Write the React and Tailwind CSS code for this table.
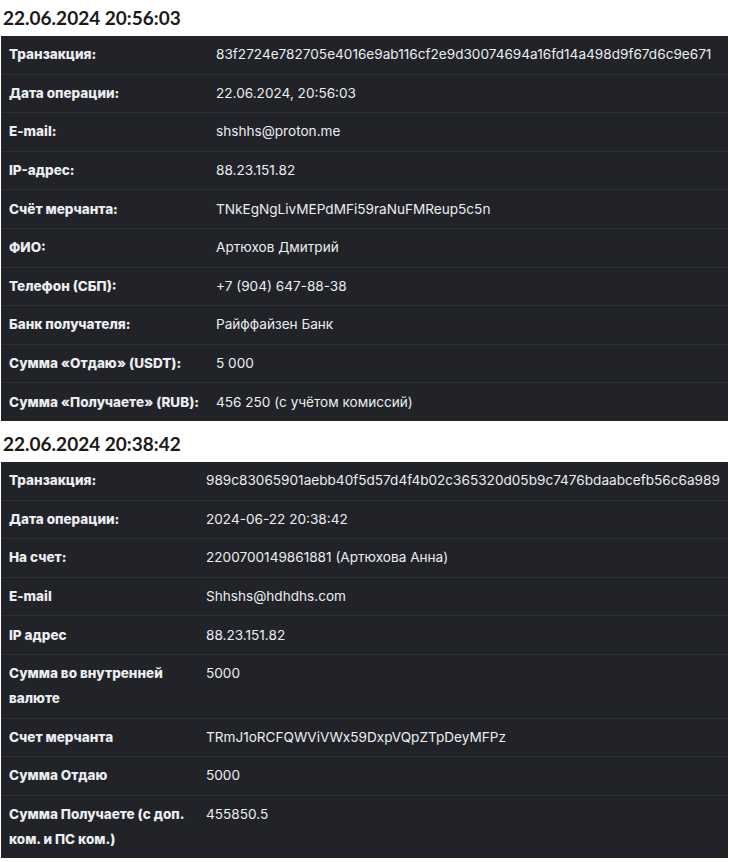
const first = [
    ["Транзакция:", "83f2724e782705e4016e9ab116cf2e9d30074694a16fd14a498d9f67d6c9e671"],
    ["Дата операции:", "22.06.2024, 20:56:03"],
    ["E-mail:", "shshhs@proton.me"],
    ["IP-адрес:", "88.23.151.82"],
    ["Счёт мерчанта:", "TNkEgNgLivMEPdMFi59raNuFMReup5c5n"],
    ["ФИО:", "Артюхов Дмитрий"],
    ["Телефон (СБП):", "+7 (904) 647-88-38"],
    ["Банк получателя:", "Райффайзен Банк"],
    ["Сумма «Отдаю» (USDT):", "5 000"],
    ["Сумма «Получаете» (RUB):", "456 250 (с учётом комиссий)"],
];

const second = [
    ["Транзакция:", "989c83065901aebb40f5d57d4f4b02c365320d05b9c7476bdaabcefb56c6a989"],
    ["Дата операции:", "2024-06-22 20:38:42"],
    ["На счет:", "2200700149861881 (Артюхова Анна)"],
    ["E-mail", "Shhshs@hdhdhs.com"],
    ["IP адрес", "88.23.151.82"],
    ["Сумма во внутренней валюте", "5000"],
    ["Счет мерчанта", "TRmJ1oRCFQWViVWx59DxpVQpZTpDeyMFPz"],
    ["Сумма Отдаю", "5000"],
    ["Сумма Получаете (с доп. ком. и ПС ком.)", "455850.5"],
];

const Block = ({ title, rows, labelWidth }) => (
    <section className="[&+section]:mt-[5px]">
        <h2 className="px-[2px] pt-[6px] pb-[6px] text-[19px] leading-[24px] font-bold text-[#1a1a1a]" style={{ fontFamily: "Lato, sans-serif" }}>
            {title}
        </h2>
        <table className="w-full border-collapse bg-[#212328] text-[#eceef1]">
            <tbody>
                {rows.map(([label, value], i) => (
                    <tr key={i} className={i ? "border-t border-[#2e3137]" : ""}>
                        <td className={`${labelWidth} pl-[8px] pr-[8px] py-[6.3px] align-top text-[13.5px] leading-[25px] font-extrabold`}>
                            {label}
                        </td>
                        <td className="pr-[8px] py-[6.3px] align-top text-[13.6px] leading-[25px]">
                            {value}
                        </td>
                    </tr>
                ))}
            </tbody>
        </table>
    </section>
);

export default function App() {
    return (
        <div className="w-[729px] min-h-[862px] bg-white px-[1px]" style={{ fontFamily: "Inter, sans-serif" }}>
            <Block title="22.06.2024 20:56:03" rows={first} labelWidth="w-[215px]" />
            <Block title="22.06.2024 20:38:42" rows={second} labelWidth="w-[205px]" />
        </div>
    );
}
